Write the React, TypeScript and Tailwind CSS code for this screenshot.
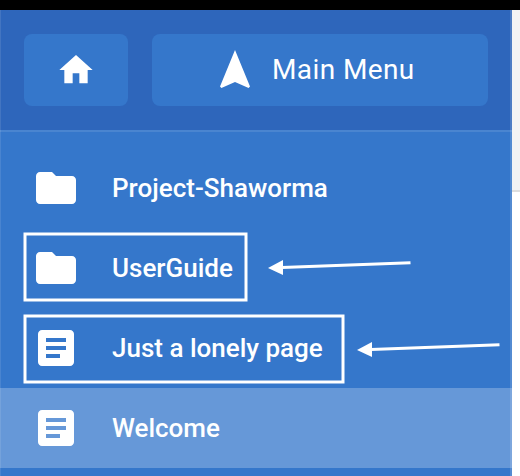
import type { ReactNode } from 'react';

const FolderIcon = () => (
  <svg viewBox="0 0 24 24" className="size-12 shrink-0 fill-white">
    <path d="M10 4H4c-1.1 0-1.99.9-1.99 2L2 18c0 1.1.9 2 2 2h16c1.1 0 2-.9 2-2V8c0-1.1-.9-2-2-2h-8l-2-2z" />
  </svg>
);

const PageIcon = () => (
  <svg viewBox="0 0 24 24" className="size-12 shrink-0 fill-white">
    <path d="M19 3H5c-1.1 0-2 .9-2 2v14c0 1.1.9 2 2 2h14c1.1 0 2-.9 2-2V5c0-1.1-.9-2-2-2zm-5 14H7v-2h7v2zm3-4H7v-2h10v2zm0-4H7V7h10v2z" />
  </svg>
);

function Item({ icon, label, active }: { icon: ReactNode; label: string; active?: boolean }) {
  return (
    <li className={`flex h-20 items-center gap-8 pl-8 ${active ? 'bg-[#6698d8]' : ''}`}>
      {icon}
      <span className="text-[26px] font-medium whitespace-nowrap">{label}</span>
    </li>
  );
}

export default function App() {
  return (
    <div className="relative flex h-[476px] w-[520px] flex-col overflow-hidden bg-white font-['Roboto',sans-serif] text-white">
      <div className="h-2.5 shrink-0 bg-black" />
      <div className="flex flex-1">
        <aside className="relative flex w-[512px] flex-col bg-[#3577cb]">
          <header className="flex h-[122px] shrink-0 gap-6 border-b-2 border-[#4a85d0] bg-[#2e66bb] p-6">
            <button className="flex h-[72px] w-[104px] items-center justify-center rounded-lg bg-[#3577cb]">
              <svg viewBox="0 0 24 24" className="size-10 fill-white">
                <path d="M10 20v-6h4v6h5v-8h3L12 3 2 12h3v8z" />
              </svg>
            </button>
            <button className="flex h-[72px] w-[336px] items-center gap-[13px] rounded-lg bg-[#3577cb] pl-[59px]">
              <svg viewBox="0 0 24 24" className="size-12 fill-white">
                <path d="M12 2L4.5 20.29l.71.71L12 18l6.79 3 .71-.71z" />
              </svg>
              <span className="text-[28px] tracking-[0.4px] whitespace-nowrap">Main Menu</span>
            </button>
          </header>
          <ul className="pt-4">
            <Item icon={<FolderIcon />} label="Project-Shaworma" />
            <Item icon={<FolderIcon />} label="UserGuide" />
            <Item icon={<PageIcon />} label="Just a lonely page" />
            <Item icon={<PageIcon />} label="Welcome" active />
          </ul>
          {/* Translucent edges over header and rows */}
          <div className="pointer-events-none absolute inset-0 border-r-2 border-l border-r-white/15 border-l-white/10" />
        </aside>
        <div className="h-[182px] flex-1 border-b-2 border-[#dedede] bg-[#f4f4f4]" />
      </div>
      <svg viewBox="0 0 520 476" className="absolute inset-0 h-[476px] w-[520px]" fill="none" stroke="#fff" strokeWidth="3">
        <rect x="25" y="234" width="221" height="66" />
        <rect x="25" y="316" width="318" height="66" />
        <path d="M282 267.500L410.500 262.800" />
        <path d="M371 349.500L499.500 344.800" />
        <path d="M268 268L283 260V275z" fill="#fff" stroke="none" />
        <path d="M357 350L372 342V357z" fill="#fff" stroke="none" />
      </svg>
    </div>
  );
}
